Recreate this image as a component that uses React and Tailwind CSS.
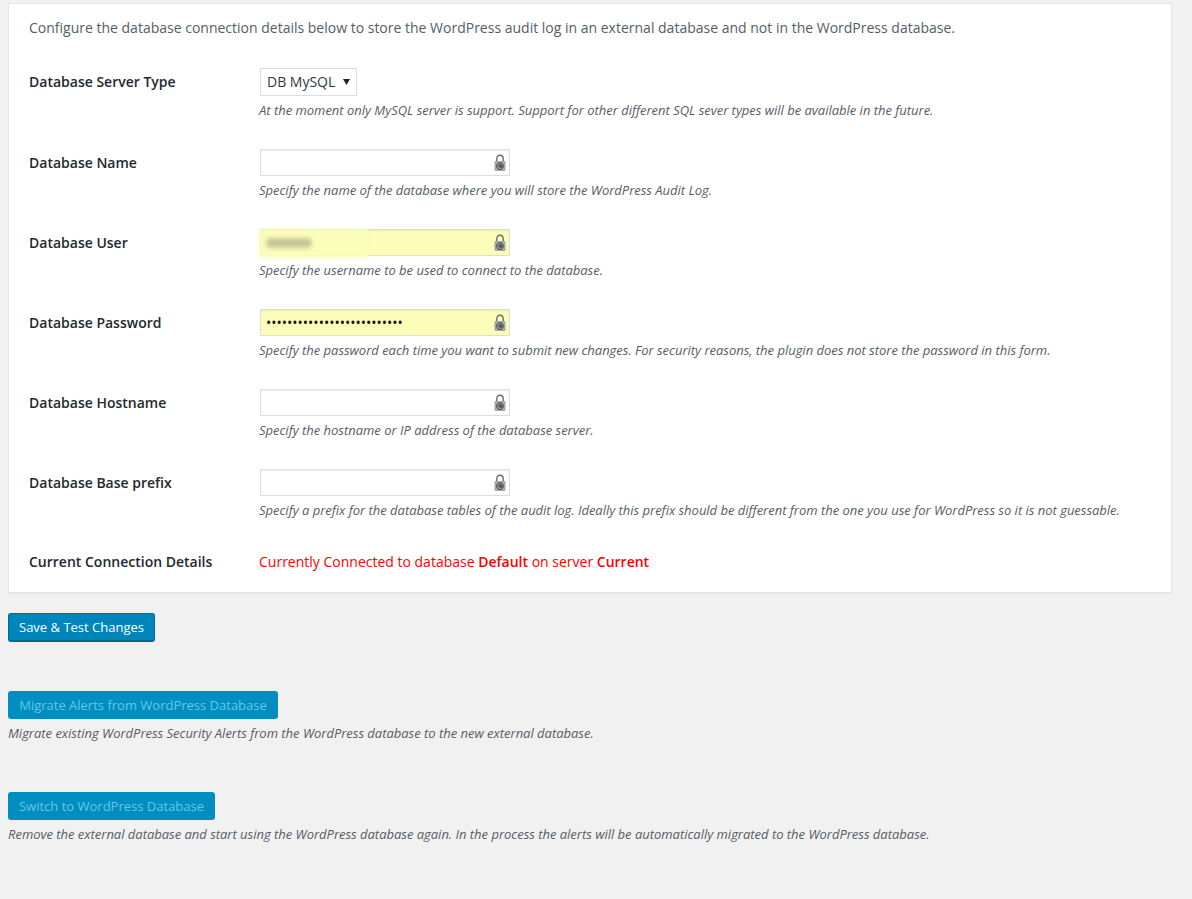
import React from 'react';

const fields = [
  { label: 'Database Name', hint: 'Specify the name of the database where you will store the WordPress Audit Log.' },
  { label: 'Database User', hint: 'Specify the username to be used to connect to the database.', filled: true, blurred: true },
  { label: 'Database Password', hint: 'Specify the password each time you want to submit new changes. For security reasons, the plugin does not store the password in this form.', filled: true, password: true },
  { label: 'Database Hostname', hint: 'Specify the hostname or IP address of the database server.' },
  { label: 'Database Base prefix', hint: 'Specify a prefix for the database tables of the audit log. Ideally this prefix should be different from the one you use for WordPress so it is not guessable.' },
];

function LockIcon() {
  return (
    <svg width="12" height="17" viewBox="0 0 12 17" className="absolute right-[3px] top-[4px]">
      <path d="M2.8 8V4.4a3.2 3.2 0 0 1 6.4 0V8" fill="none" stroke="#6e6e6e" strokeWidth="1.4" />
      <rect x="0.5" y="7" width="11" height="10" rx="1" fill="#a6a6a6" />
      <path d="M8.2 14.6A3.3 3.3 0 1 1 9.3 12v.7a1 1 0 0 1-2 0V10.4M7.3 12a1.3 1.3 0 1 1-2.6 0 1.3 1.3 0 0 1 2.6 0z" fill="none" stroke="#333" strokeWidth="0.9" />
    </svg>
  );
}

function Field({ label, hint, filled, blurred, password }) {
  return (
    <div className="flex h-[80px]">
      <div className="w-[231px] pt-[4px] text-sm leading-[20px] font-semibold text-[#23282d]">{label}</div>
      <div>
        <div className={`relative h-[27px] w-[250px] border border-[#dddddd] shadow-[inset_0_1px_2px_rgba(0,0,0,0.07)] ${filled ? 'bg-[#fbfdb9]' : 'bg-white'}`}>
          {password && (
            <input
              type="password"
              readOnly
              value="abcdefghijklmnopqrstuvwxyz"
              className="h-full w-[225px] bg-transparent pl-[5px] text-sm text-[#111] outline-none"
            />
          )}
          {blurred && (
            <>
              <div className="absolute -left-[2px] -top-[1px] h-[29px] w-[110px] bg-[#fbfdb9] blur-[2px]" />
              <div className="absolute left-[5px] top-[8px] h-[10px] w-[46px] rounded-full bg-[#c4c795] blur-[2px]" />
            </>
          )}
          <LockIcon />
        </div>
        <p className="mt-[4px] ml-[-1px] text-[13px] leading-[20px] tracking-[-0.015px] italic text-[#555d66] whitespace-nowrap">{hint}</p>
      </div>
    </div>
  );
}

export default function App() {
  return (
    <div className="min-h-[899px] bg-[#f1f1f1] pl-[8px] pr-[20px] pt-[3px] font-['Open_Sans',sans-serif]">
      <div className="h-[590px] border border-[#e5e5e5] bg-white pl-[20px] pt-[14px] shadow-[0_1px_1px_rgba(0,0,0,0.04)]">
        <p className="text-sm leading-[20px] text-[#555d66]">
          Configure the database connection details below to store the WordPress audit log in an external database and not in the WordPress database.
        </p>

        <div className="mt-[30px] flex h-[81px]">
          <div className="w-[231px] pt-[4px] text-sm leading-[20px] font-semibold text-[#23282d]">Database Server Type</div>
          <div>
            <div className="flex h-[28px] w-[97px] items-center border border-[#dddddd] bg-white pl-[6px] text-sm text-[#32373c]">
              DB MySQL
              <svg width="7" height="6" viewBox="0 0 7 6" className="ml-[8px] mb-[1px]">
                <path d="M0 0h7L3.5 6z" fill="#222" />
              </svg>
            </div>
            <p className="mt-[4px] ml-[-1px] text-[13px] leading-[20px] tracking-[-0.015px] italic text-[#555d66] whitespace-nowrap">
              At the moment only MySQL server is support. Support for other different SQL sever types will be available in the future.
            </p>
          </div>
        </div>

        {fields.map(field => (
          <Field key={field.label} {...field} />
        ))}

        <div className="flex pt-[3px] text-sm leading-[20px]">
          <div className="w-[230px] font-semibold text-[#23282d]">Current Connection Details</div>
          <div className="text-[#ff0000]">
            Currently Connected to database <strong className="font-semibold">Default</strong> on server <strong className="font-semibold">Current</strong>
          </div>
        </div>
      </div>

      <button className="mt-[20px] block h-[29px] w-[147px] rounded-[3px] border border-[#006799] border-b-[2px] bg-[#0085ba] pt-[2px] text-[13px] text-white">
        Save &amp; Test Changes
      </button>

      <button className="mt-[49px] block h-[28px] w-[270px] rounded-[3px] bg-[#008ec2] pt-[2px] text-[13px] text-[#66c6e4]">
        Migrate Alerts from WordPress Database
      </button>
      <p className="mt-[4px] text-[13px] leading-[20px] tracking-[-0.015px] italic text-[#555d66]">
        Migrate existing WordPress Security Alerts from the WordPress database to the new external database.
      </p>

      <button className="mt-[49px] block h-[28px] w-[207px] rounded-[3px] bg-[#008ec2] pt-[2px] text-[13px] text-[#66c6e4]">
        Switch to WordPress Database
      </button>
      <p className="mt-[4px] text-[13px] leading-[20px] tracking-[-0.015px] italic text-[#555d66]">
        Remove the external database and start using the WordPress database again. In the process the alerts will be automatically migrated to the WordPress database.
      </p>
    </div>
  );
}
